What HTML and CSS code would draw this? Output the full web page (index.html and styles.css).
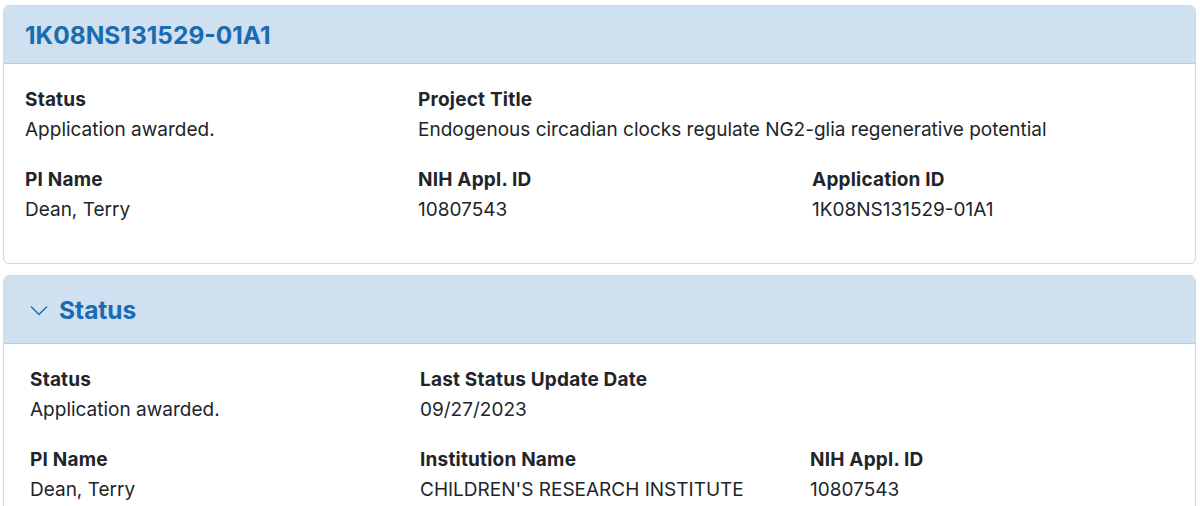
FILE: index.html
```html
<!DOCTYPE html>
<html>
<head>
<meta charset="utf-8">
<link rel="stylesheet" href="styles.css">
</head>
<body>
<div class="page">
  <section class="card">
    <header class="card-head">
      <h1 class="card-title">1K08NS131529-01A1</h1>
    </header>
    <div class="card-body grid-a">
      <div class="field"><div class="label">Status</div><div class="value">Application awarded.</div></div>
      <div class="field span2"><div class="label">Project Title</div><div class="value">Endogenous circadian clocks regulate NG2-glia regenerative potential</div></div>
      <div class="field"><div class="label">PI Name</div><div class="value">Dean, Terry</div></div>
      <div class="field"><div class="label">NIH Appl. ID</div><div class="value">10807543</div></div>
      <div class="field"><div class="label">Application ID</div><div class="value">1K08NS131529-01A1</div></div>
    </div>
  </section>
  <section class="card">
    <header class="card-head tall">
      <h2 class="section-title">
        <svg class="chevron" width="18" height="11" viewBox="0 0 18 11"><path d="M1 1.5 L9 9.5 L17 1.5" fill="none" stroke="#1b6bb0" stroke-width="1.4"/></svg>
        Status
      </h2>
    </header>
    <div class="card-body grid-b">
      <div class="field"><div class="label">Status</div><div class="value">Application awarded.</div></div>
      <div class="field span2"><div class="label">Last Status Update Date</div><div class="value">09/27/2023</div></div>
      <div class="field"><div class="label">PI Name</div><div class="value">Dean, Terry</div></div>
      <div class="field"><div class="label">Institution Name</div><div class="value">CHILDREN'S RESEARCH INSTITUTE</div></div>
      <div class="field"><div class="label">NIH Appl. ID</div><div class="value">10807543</div></div>
    </div>
  </section>
</div>
</body>
</html>
```

FILE: styles.css
```css
* { box-sizing: border-box; }
html, body { margin: 0; padding: 0; background: #fff; }
body {
  font-family: Inter, "Noto Sans", "Liberation Sans", sans-serif;
  color: #212529;
  overflow: hidden;
}
.page {
  padding: 5px 4px 0 3px;
  display: flex;
  flex-direction: column;
  gap: 11px;
}
.card {
  border: 1px solid #c9d9e8;
  border-radius: 6px;
  overflow: hidden;
  background: #fff;
}
.card-head {
  background: #cfe0f0;
  border-bottom: 1px solid #b9cde0;
  height: 58px;
  display: flex;
  align-items: center;
  padding-left: 21px;
}
.card-head.tall {
  height: 68px;
  padding-left: 26px;
}
.card-title {
  margin: 0;
  font-size: 24.5px;
  font-weight: 700;
  color: #1b6bb0;
}
.section-title {
  margin: 0;
  font-size: 24.5px;
  font-weight: 700;
  color: #1b6bb0;
  display: flex;
  align-items: center;
  gap: 11px;
}
.chevron { display: block; margin-top: 1px; }
.card-body {
  display: grid;
  padding: 21px 0 38px 21px;
  row-gap: 20px;
}
.grid-a { grid-template-columns: 393px 394px 1fr; }
.grid-b { grid-template-columns: 390px 390px 1fr; padding-left: 26px; }
.span2 { grid-column: span 2; }
.label {
  font-weight: 700;
  font-size: 19px;
  line-height: 30px;
  letter-spacing: 0.2px;
}
.value {
  font-size: 19px;
  line-height: 30px;
}
```
